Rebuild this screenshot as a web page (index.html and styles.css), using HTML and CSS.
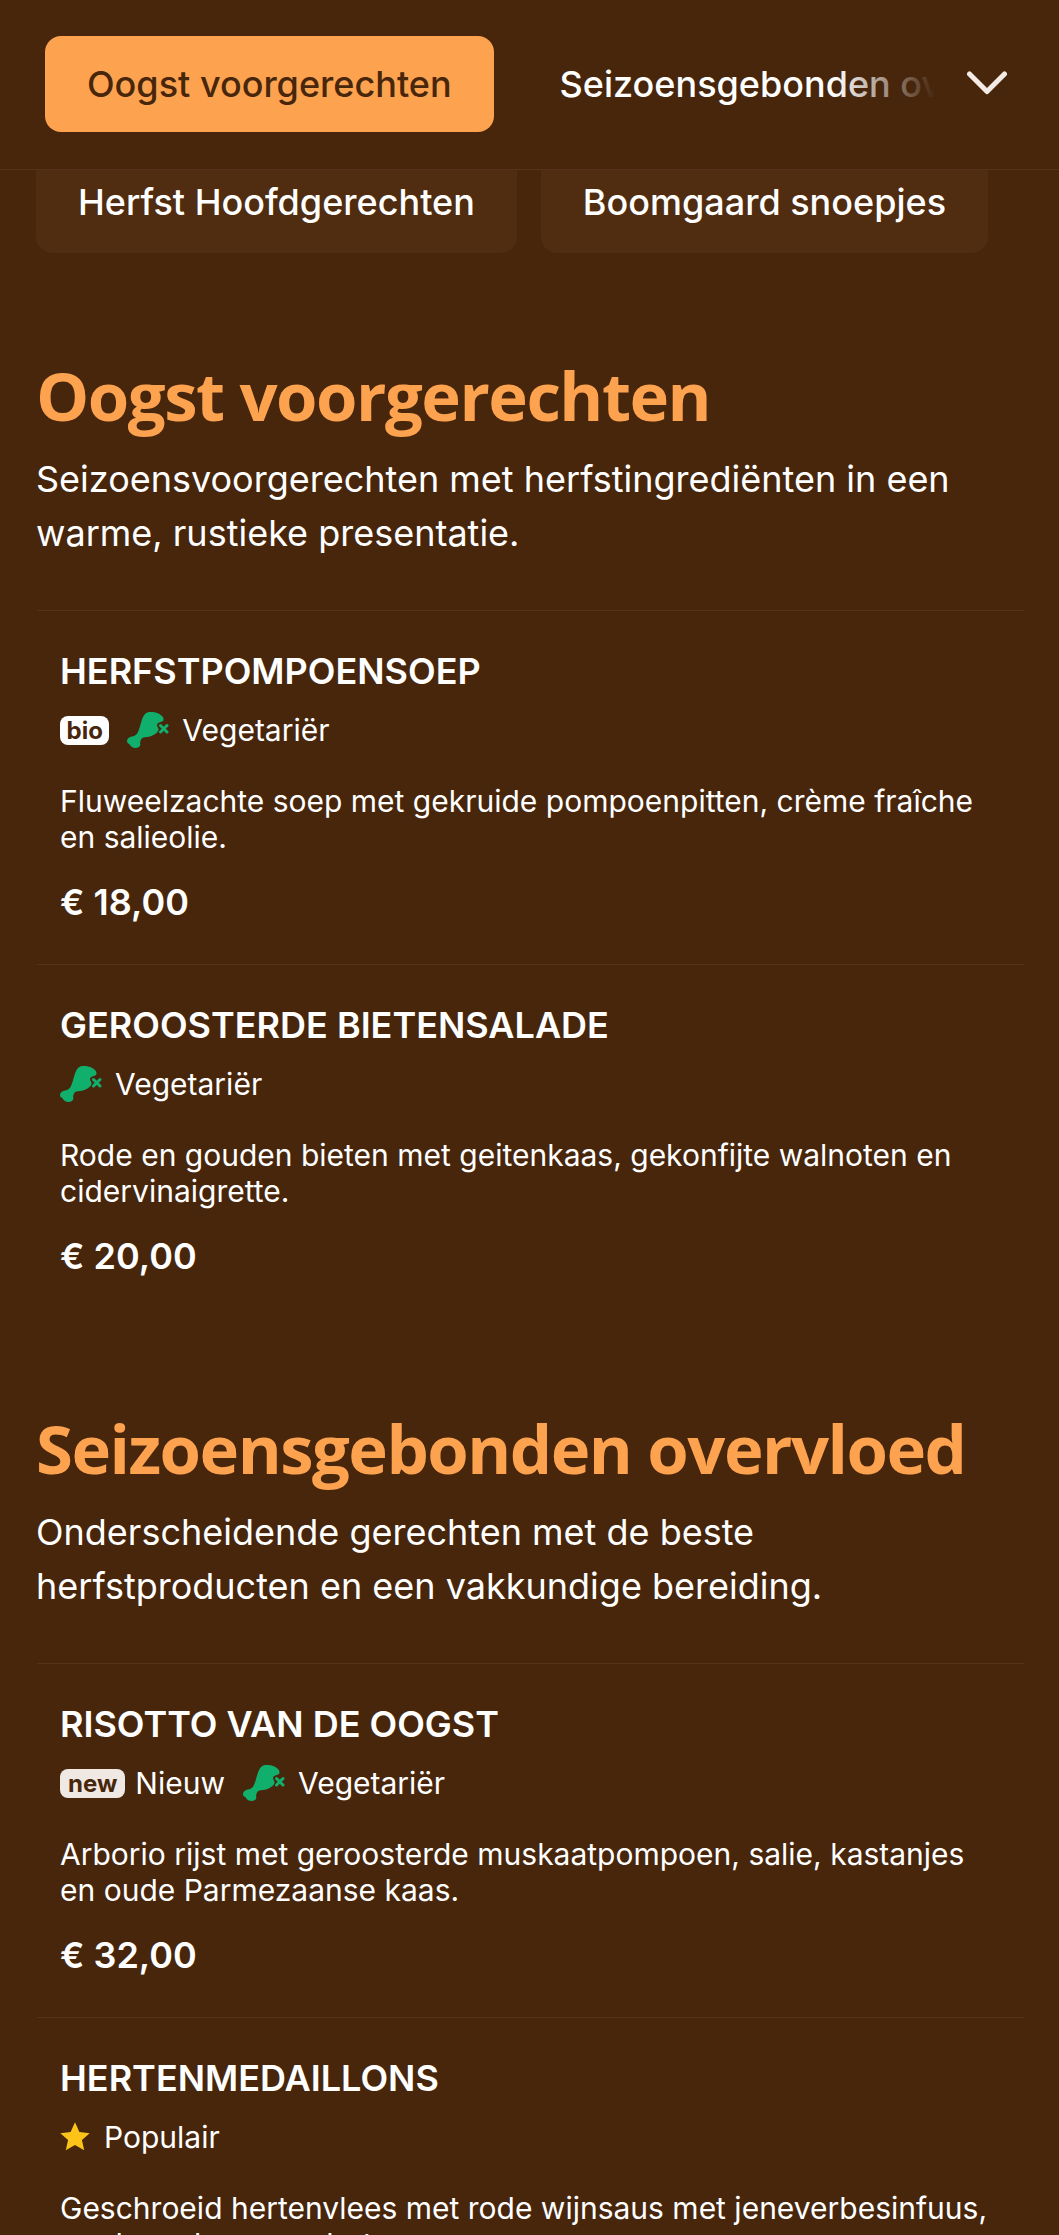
FILE: index.html
```html
<!DOCTYPE html>
<html lang="nl">
  <head>
    <meta charset="UTF-8" />
    <meta name="viewport" content="width=device-width, initial-scale=1.0" />
    <title>Herfstmenu</title>
    <link rel="stylesheet" href="styles.css">
  </head>
  <body>
    <svg class="defs" width="0" height="0" aria-hidden="true">
      <symbol id="veg" viewBox="0 0 42 36">
        <path fill="#10b06c" d="M22 0C27 -0.500 32 1 35 4C37 6 37 8.500 35 9.500C32 10.500 30 11 30 13C30 15 32 16 31.500 18C30 22 25 24.500 20 25C17 25.300 15 25.500 14 27.500C13 29.500 13 31 13.300 32.500C13.600 35 10 36.500 7 35.800C4.500 35.200 3 33.500 2.500 32C1.500 32 0 31 0 29C0 26.500 2.500 25 5 24.500C8 24 9.800 22.500 11 20C12.500 16.500 13.500 12 15 7.500C16.500 3 18.500 0.500 22 0Z"/>
        <path fill="none" stroke="#10b06c" stroke-width="3" stroke-linecap="round" d="M33.500 13.500L40 20M40 13.500L33.500 20"/>
      </symbol>
    </svg>

    <header class="topbar">
      <nav class="tabs">
        <a class="tab active">Oogst voorgerechten</a>
        <a class="tab">Seizoensgebonden overvloed</a>
      </nav>
      <div class="fade"></div>
      <svg class="chevron" viewBox="0 0 40 24" width="40" height="24">
        <path d="M2.500 3L20 20.500L37.500 3" fill="none" stroke="#f4ebe6" stroke-width="5" stroke-linecap="round" stroke-linejoin="round"/>
      </svg>
    </header>

    <div class="chips">
      <a class="chip">Herfst Hoofdgerechten</a>
      <a class="chip">Boomgaard snoepjes</a>
    </div>

    <main>
      <section class="section">
        <h1>Oogst voorgerechten</h1>
        <p class="intro">Seizoensvoorgerechten met herfstingrediënten in een warme, rustieke presentatie.</p>
        <article class="dish">
          <h2>HERFSTPOMPOENSOEP</h2>
          <div class="tags">
            <span class="tag with-badge"><span class="badge">bio</span></span>
            <span class="tag"><svg class="leg"><use href="#veg"/></svg>Vegetariër</span>
          </div>
          <p class="desc">Fluweelzachte soep met gekruide pompoenpitten, crème fraîche en salieolie.</p>
          <div class="price">€ 18,00</div>
        </article>
        <article class="dish">
          <h2>GEROOSTERDE BIETENSALADE</h2>
          <div class="tags">
            <span class="tag"><svg class="leg"><use href="#veg"/></svg>Vegetariër</span>
          </div>
          <p class="desc">Rode en gouden bieten met geitenkaas, gekonfijte walnoten en cidervinaigrette.</p>
          <div class="price">€ 20,00</div>
        </article>
      </section>

      <section class="section">
        <h1>Seizoensgebonden overvloed</h1>
        <p class="intro">Onderscheidende gerechten met de beste herfstproducten en een vakkundige bereiding.</p>
        <article class="dish">
          <h2>RISOTTO VAN DE OOGST</h2>
          <div class="tags">
            <span class="tag with-badge"><span class="badge new">new</span>Nieuw</span>
            <span class="tag"><svg class="leg"><use href="#veg"/></svg>Vegetariër</span>
          </div>
          <p class="desc">Arborio rijst met geroosterde muskaatpompoen, salie, kastanjes en oude Parmezaanse kaas.</p>
          <div class="price">€ 32,00</div>
        </article>
        <article class="dish">
          <h2>HERTENMEDAILLONS</h2>
          <div class="tags">
            <span class="tag">
              <svg class="star" viewBox="0 0 24 24" width="32" height="32"><path fill="#fcc419" d="M12 1l3.300 7.300 7.700.8-5.800 5.200 1.700 7.700L12 18l-6.900 4 1.700-7.700L1 9.100l7.700-.8z"/></svg>
              Populair
            </span>
          </div>
          <p class="desc">Geschroeid hertenvlees met rode wijnsaus met jeneverbesinfuus, aardappel en roomboter.</p>
          <div class="price">€ 42,00</div>
        </article>
      </section>
    </main>
  </body>
</html>
```

FILE: styles.css
```css
html, body {
  height: 2235px;
  overflow: hidden;
}
body {
  margin: 0;
  background-color: #47260c;
  color: #fff;
  font-family: Inter, "Noto Sans", sans-serif;
}
.defs {
  display: block;
}
.topbar {
  position: relative;
  height: 169px;
  border-bottom: 1px solid #54331a;
  overflow: hidden;
}
.tabs {
  display: flex;
  align-items: center;
  gap: 24px;
  height: 168px;
  padding-left: 45px;
  white-space: nowrap;
}
.tab {
  display: block;
  padding: 0 42px;
  font-size: 36px;
  font-weight: 500;
  line-height: 96px;
}
.tab.active {
  background-color: #fda24f;
  color: #47260c;
  border-radius: 16px;
}
.fade {
  position: absolute;
  top: 0;
  right: 0;
  bottom: 0;
  width: 224px;
  background: linear-gradient(to right, rgba(71, 38, 12, 0) 0, #47260c 100px);
}
.chevron {
  position: absolute;
  top: 71px;
  right: 52px;
}
.chips {
  display: flex;
  gap: 24px;
  height: 83px;
  margin-bottom: 12px;
  padding-left: 36px;
}
.chip {
  display: block;
  padding: 0 42px;
  background-color: #502c10;
  border-radius: 0 0 16px 16px;
  font-size: 36px;
  font-weight: 500;
  line-height: 64px;
  white-space: nowrap;
}
.section {
  padding: 0 36px;
}
h1 {
  margin: 0;
  padding-top: 90px;
  color: #fda24f;
  font-family: "Open Sans", sans-serif;
  font-size: 67px;
  font-weight: 700;
  letter-spacing: -1.500px;
  line-height: 80px;
}
.intro {
  margin: 17px 0 0;
  font-size: 36px;
  line-height: 54px;
}
.dish {
  height: 353px;
  margin: 0 -1px 0 1px;
  padding: 0 24px 0 23px;
  border-top: 1px solid #54331a;
}
.intro + .dish {
  margin-top: 50px;
}
h2 {
  margin: 40px 0 0;
  font-size: 36px;
  font-weight: 600;
  line-height: 40px;
}
.tags {
  display: flex;
  align-items: center;
  gap: 18px;
  height: 40px;
  margin-top: 19px;
}
.tag {
  display: flex;
  align-items: center;
  gap: 13px;
  font-size: 30px;
}
.with-badge {
  gap: 10px;
}
.badge {
  padding: 0 6.500px;
  background-color: #fff;
  color: #47260c;
  border-radius: 8px;
  font-size: 24px;
  font-weight: 700;
  line-height: 29px;
}
.badge.new {
  padding: 0 8px;
  background-color: #efe8e3;
}
.leg {
  width: 42px;
  height: 36px;
}
.star {
  margin-left: -1px;
}
.desc {
  margin: 33px 0 0;
  font-size: 30px;
  line-height: 36px;
}
.price {
  margin-top: 27px;
  font-size: 36px;
  font-weight: 600;
  line-height: 40px;
}
```
